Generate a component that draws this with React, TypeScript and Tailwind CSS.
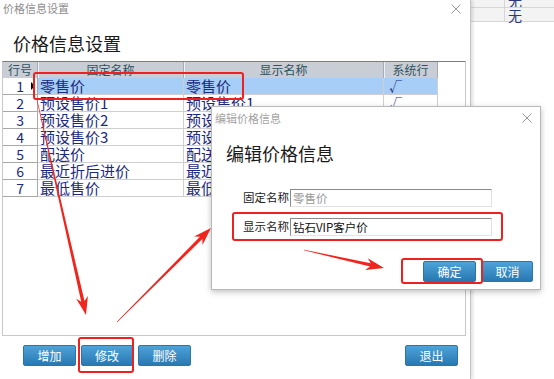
const FONT = { fontFamily: '"Noto Sans CJK SC", "Noto Sans", sans-serif' }

const rows = [
  ['零售价', '零售价', true],
  ['预设售价1', '预设售价1', true],
  ['预设售价2', '预设售价2', false],
  ['预设售价3', '预设售价3', false],
  ['配送价', '配送价', false],
  ['最近折后进价', '最近折后进价', false],
  ['最低售价', '最低售价', false],
] as const

function CloseX() {
  return (
    <svg width="10" height="10" viewBox="0 0 10 10" fill="none" stroke="#9a9a9a" strokeWidth="1">
      <path d="M0.5 0.5 9.5 9.5M9.5 0.5 0.5 9.5" />
    </svg>
  )
}

function Btn({ label, className = '' }: { label: string; className?: string }) {
  return (
    <div
      className={`h-[21px] flex items-center justify-center rounded-[2px] border border-[#2d74a8] bg-gradient-to-b from-[#4ea3d8] to-[#2878b2] text-white text-[12px] leading-none ${className}`}
    >
      {label}
    </div>
  )
}

// tapered arrow polygon, thin tail -> barbed head
function arrowPts(x1: number, y1: number, x2: number, y2: number, hl = 14, hw = 6, w0 = 0.4, w1 = 1.6) {
  const dx = x2 - x1
  const dy = y2 - y1
  const L = Math.hypot(dx, dy)
  const ux = dx / L
  const uy = dy / L
  const nx = -uy
  const ny = ux
  const bx = x2 - ux * hl
  const by = y2 - uy * hl
  const p = [
    [x1 + nx * w0, y1 + ny * w0],
    [bx + nx * w1, by + ny * w1],
    [bx - ux * 4 + nx * hw, by - uy * 4 + ny * hw],
    [x2, y2],
    [bx - ux * 4 - nx * hw, by - uy * 4 - ny * hw],
    [bx - nx * w1, by - ny * w1],
    [x1 - nx * w0, y1 - ny * w0],
  ]
  return p.map(([a, b]) => `${a.toFixed(1)},${b.toFixed(1)}`).join(' ')
}

export default function App() {
  return (
    <div className="relative w-[554px] h-[379px] overflow-hidden bg-white flex" style={FONT}>
      {/* main window */}
      <div className="w-[471px] shrink-0 h-full bg-white border-r border-[#c4c4c4] shadow-[2px_0_3px_rgba(0,0,0,0.12)] flex flex-col z-10">
        <div className="h-[17px] flex items-center justify-between pl-[3px] pr-[9px]">
          <span className="text-[11px] text-[#8e8e8e] leading-none">价格信息设置</span>
          <CloseX />
        </div>
        <div className="h-[44px] pl-[13px] pt-[16px] text-[18px] leading-[20px] text-[#1a1a1a]">价格信息设置</div>

        {/* grid */}
        <div className="ml-[2px] w-[464px] h-[275px] border border-[#c8c8c8] border-t-[#7c7c7c] flex flex-col">
          <div className="h-[16px] flex text-[12px] leading-[16px] text-[#2f5260]">
            <div className="w-[35px] bg-[#c9ced6] border-r border-[#a4acb5] text-center">行号</div>
            <div className="w-[146px] bg-[#c9ced6] border-r border-[#a4acb5] shadow-[inset_1px_0_0_#eef1f4] text-center">固定名称</div>
            <div className="w-[200px] bg-[#c9ced6] border-r border-[#a4acb5] shadow-[inset_1px_0_0_#eef1f4] text-center">显示名称</div>
            <div className="w-[54px] bg-[#c9ced6] border-r border-[#a4acb5] shadow-[inset_1px_0_0_#eef1f4] text-center">系统行</div>
          </div>
          {rows.map(([fixed, shown, sys], i) => {
            const sel = i === 0
            const cell = `h-[17px] border-r border-b border-[#cfcfcf] pl-[2px] whitespace-nowrap ${sel ? 'bg-[#a6cef6]' : 'bg-white'}`
            return (
              <div key={i} className="flex text-[15px] leading-[16px] text-[#1c2a7e]">
                <div className="w-[35px] h-[17px] flex items-center bg-white border-r border-b border-[#a8a8a8]">
                  <span className="w-[21px] text-right text-[14px]">{i + 1}</span>
                  {sel && (
                    <span className="ml-[7px] w-0 h-0 border-y-[4px] border-y-transparent border-l-[4px] border-l-black" />
                  )}
                </div>
                <div className={`w-[146px] ${cell}`}>{fixed}</div>
                <div className={`w-[200px] ${cell}`}>{shown}</div>
                <div className={`w-[54px] ${cell} pl-[5px] text-[13px]`}>{sys ? '√' : ''}</div>
              </div>
            )
          })}
        </div>

        <div className="mt-[9px] flex pl-[23px] pr-[12px]">
          <Btn label="增加" className="w-[53px]" />
          <Btn label="修改" className="w-[52px] ml-[5px]" />
          <Btn label="删除" className="w-[53px] ml-[5px]" />
          <Btn label="退出" className="w-[53px] ml-auto" />
        </div>
      </div>

      {/* background window fragment */}
      <div className="flex-1 flex flex-col">
        <div className="h-[8px] flex border-b border-[#d6d6d6] bg-[#f3f3f3] overflow-hidden">
          <div className="w-[34px] border-r border-[#d6d6d6]" />
          <div className="pl-[3px] text-[14px] leading-[14px] -mt-[7px] text-[#2a3a7c]">无</div>
        </div>
        <div className="h-[14px] flex border-b border-[#d6d6d6] bg-[#f3f3f3]">
          <div className="w-[34px] border-r border-[#d6d6d6]" />
          <div className="pl-[3px] text-[14px] leading-[14px] text-[#2a3a7c]">无</div>
        </div>
      </div>

      {/* edit dialog */}
      <div className="absolute left-[211px] top-[106px] w-[330px] h-[184px] bg-white border border-[#b9b9b9] shadow-[0_2px_6px_rgba(0,0,0,0.25)] z-20 flex flex-col">
        <div className="h-[22px] shrink-0 flex items-center justify-between pl-[3px] pr-[8px]">
          <span className="text-[11px] text-[#a2a2a2] leading-none">编辑价格信息</span>
          <CloseX />
        </div>
        <div className="pl-[14px] pt-[14px] text-[18px] leading-[20px] text-[#1a1a1a]">编辑价格信息</div>
        <div className="mt-[26px] h-[18px] flex items-center pl-[31px] text-[11.5px] whitespace-nowrap">
          <span className="w-[47px] text-[#222]">固定名称</span>
          <div className="w-[202px] h-[18px] border border-[#8a8a8a] border-b-[#e2e2e2] border-r-[#e2e2e2] pl-[2px] leading-[16px] text-[#9a9a9a]">零售价</div>
        </div>
        <div className="mt-[11px] h-[18px] flex items-center pl-[31px] text-[11.5px] whitespace-nowrap">
          <span className="w-[47px] text-[#222]">显示名称</span>
          <div className="w-[202px] h-[18px] border border-[#8a8a8a] border-b-[#e2e2e2] border-r-[#e2e2e2] pl-[2px] leading-[16px] text-[#111]">钻石VIP客户价</div>
        </div>
        <div className="mt-[25px] flex justify-end gap-[6px] pr-[7px]">
          <Btn label="确定" className="w-[53px]" />
          <Btn label="取消" className="w-[51px]" />
        </div>
      </div>

      {/* red annotation boxes */}
      <div className="absolute left-[33px] top-[72px] w-[211px] h-[28px] border-[2.5px] border-[#ee2020] rounded-[3px] z-30" />
      <div className="absolute left-[78px] top-[337px] w-[56px] h-[36px] border-[2.5px] border-[#ee2020] rounded-[3px] z-30" />
      <div className="absolute left-[232px] top-[212px] w-[271px] h-[29px] border-[2.5px] border-[#ee2020] rounded-[3px] z-30" />
      <div className="absolute left-[401px] top-[258px] w-[82px] h-[26px] border-[2.5px] border-[#ee2020] rounded-[3px] z-30" />

      {/* arrows */}
      <svg className="absolute left-0 top-0 z-30 pointer-events-none" width="554" height="379" viewBox="0 0 554 379">
        <polygon points={arrowPts(37, 100, 86, 315, 14, 6, 0.3, 1.7)} fill="#f0261e" />
        <polygon points={arrowPts(117, 322, 211, 228, 14, 6, 0.3, 1.7)} fill="#f0261e" />
        <polygon points={arrowPts(304, 250, 384, 268, 14, 6, 0.3, 1.7)} fill="#f0261e" />
      </svg>
    </div>
  )
}
